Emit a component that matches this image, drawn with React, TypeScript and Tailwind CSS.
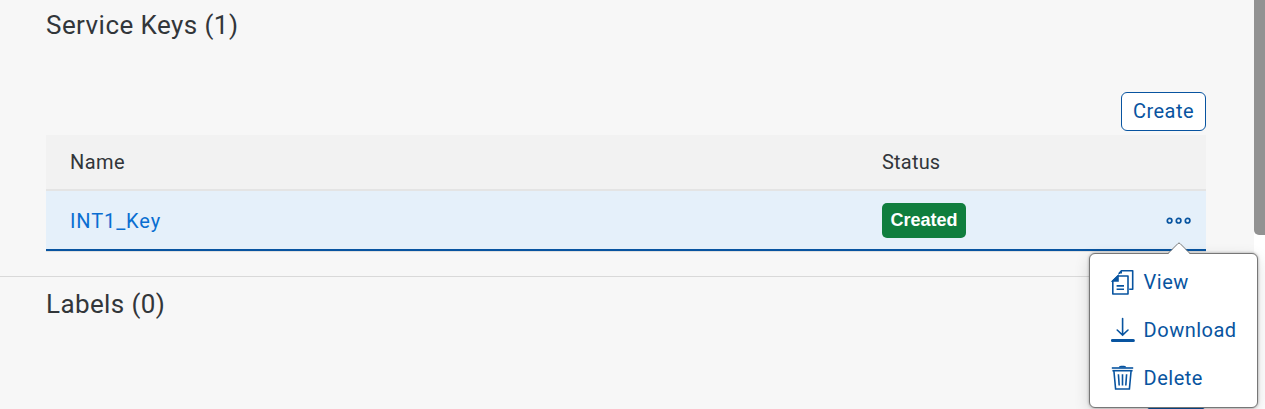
import type { ReactNode } from 'react';

function CopyIcon() {
  return (
    <svg width="24" height="26" viewBox="0 0 24 26" fill="none" stroke="#0854a0" strokeWidth="1.6">
      <path d="M8.2 5V4.2L10.4 1.8H21.7V20.2H18.2" strokeLinejoin="round" />
      <path d="M8 4.4H11V1.3Z" fill="#0854a0" stroke="none" />
      <path d="M7 7H17V25H1.8V12Z" strokeLinejoin="round" />
      <path d="M7 7V12H1.8Z" fill="#0854a0" />
      <path d="M5.6 16.9H13M5.6 20.2H13" />
    </svg>
  );
}

function DownloadIcon() {
  return (
    <svg width="24" height="26" viewBox="0 0 24 26" fill="none" stroke="#0854a0" strokeWidth="1.6" strokeLinecap="round">
      <path d="M11.6 1.5V17.8M6.2 13L11.6 18.2L17 13" />
      <path d="M1.4 23.5H22.4" strokeWidth="3" />
    </svg>
  );
}

function TrashIcon() {
  return (
    <svg width="24" height="26" viewBox="0 0 24 26" fill="none" stroke="#0854a0" strokeWidth="1.6">
      <path d="M7.6 2.6Q8 .8 10 .8H13Q15 .8 15.4 2.6Z" fill="#0854a0" stroke="none" />
      <path d="M.8 3H22.2" />
      <path d="M1.4 5.7H21.6" />
      <path d="M2.9 5.7L4.6 24H18.4L20.1 5.7" />
      <path d="M7.4 9.2L8.2 20.5M11.5 9.2V20.5M15.6 9.2L14.8 20.5" />
    </svg>
  );
}

function MenuItem({ icon, children }: { icon: ReactNode; children: ReactNode }) {
  return (
    <button className="flex h-12 items-center gap-[8.6px] pl-[21px] text-left text-[#0854a0]">
      {icon}
      {children}
    </button>
  );
}

export default function App() {
  return (
    <div className="relative flex h-[409px] w-[1265px] overflow-hidden bg-white font-['Roboto',sans-serif] text-[20px] leading-6 font-normal text-[#32363a]">
      <main className="w-[1254px] bg-[#f7f7f7]">
        <section className="h-[277px] border-b border-[#d9d9d9] pr-12 pl-[46px]">
          <h2 className="h-[92px] pt-[9px] text-[26px] leading-8 tracking-[0.44px]">Service Keys (1)</h2>
          <div className="flex h-[43px] justify-end">
            <button className="h-[39px] w-[85px] rounded-[6px] border border-[#0854a0] bg-white pb-[2px] tracking-[0.5px] text-[#0854a0]">
              Create
            </button>
          </div>
          <div className="flex h-[56px] items-center border-b-2 border-[#e4e4e4] bg-[#f2f2f2] pl-6 tracking-[0.2px]">
            <span className="w-[812px] tracking-[0.4px]">Name</span>
            <span>Status</span>
          </div>
          <div className="flex h-[60px] items-center border-b-2 border-[#0854a0] bg-[#e5f0fa] pr-[14px] pl-6 shadow-[0_1px_0_#e0e0e0]">
            <a className="w-[812px] pt-[2px] tracking-[0.9px] text-[#0a6ed1]">INT1_Key</a>
            <span className="flex h-[35px] w-[84px] items-center justify-center rounded-[5px] bg-[#107e3e] font-['Liberation_Sans',sans-serif] text-[18px] font-bold text-white">
              Created
            </span>
            <svg className="mt-px ml-auto" width="26" height="8" viewBox="0 0 26 8" fill="none" stroke="#0854a0" strokeWidth="1.7">
              <circle cx="3.6" cy="3.7" r="2.3" />
              <circle cx="12.6" cy="3.7" r="2.3" />
              <circle cx="21.6" cy="3.7" r="2.3" />
            </svg>
          </div>
        </section>
        <section className="relative h-[132px] pl-[46px]">
          <h2 className="pt-[11px] text-[26px] leading-8 tracking-[0.38px]">Labels (0)</h2>
          <button className="absolute top-[130px] left-[1146px] h-[39px] w-[60px] rounded-[6px] border-2 border-[#0854a0] bg-white" />
        </section>
      </main>
      <div className="h-[235px] w-[11px] rounded-bl-[5px] bg-[#929292]" />

      <div className="absolute top-[253px] left-[1089px] flex h-[155px] w-[169px] flex-col rounded-[6px] border border-[#777] bg-white pt-[4px] tracking-[0.5px] shadow-[0_0_3px_rgba(0,0,0,0.35),0_5px_16px_rgba(0,0,0,0.14)]">
        <svg className="absolute -top-[12px] left-[77px]" width="24" height="13" viewBox="0 0 24 13">
          <path d="M0 13L11 1.5Q12 .5 13 1.5L24 13Z" fill="white" />
          <path d="M0.5 12L11 1.5Q12 .5 13 1.5L23.5 12" fill="none" stroke="#777" />
        </svg>
        <MenuItem icon={<CopyIcon />}>View</MenuItem>
        <MenuItem icon={<DownloadIcon />}>Download</MenuItem>
        <MenuItem icon={<TrashIcon />}>Delete</MenuItem>
      </div>
    </div>
  );
}
